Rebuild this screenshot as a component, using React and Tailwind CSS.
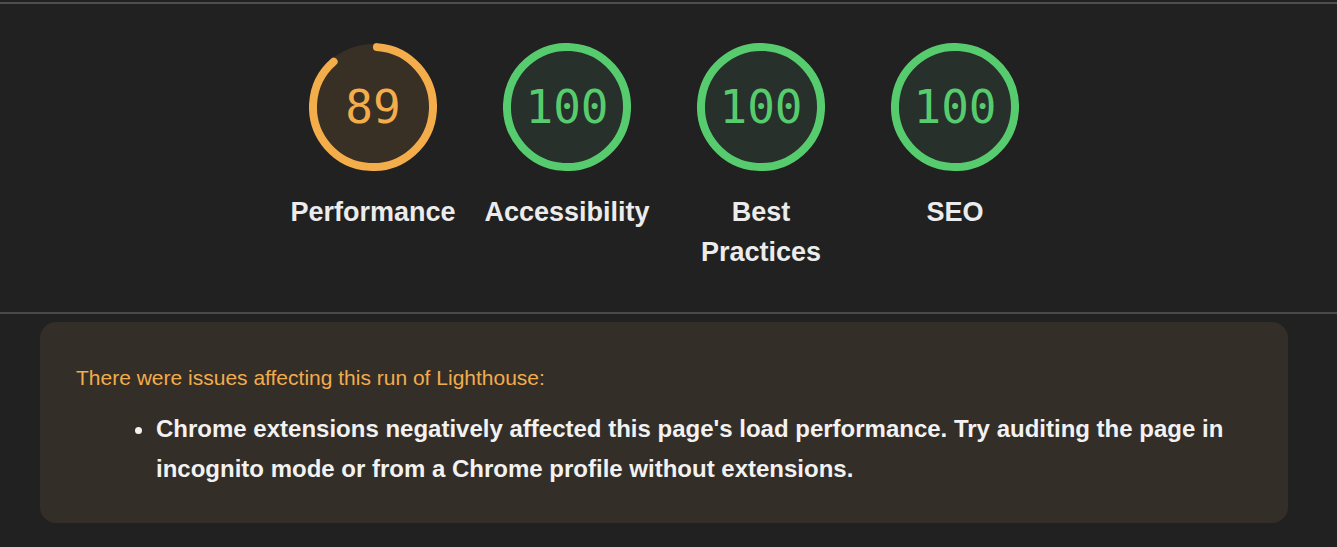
import React from "react";

function Gauge({ value, label, color, fill }) {
  const C = 2 * Math.PI * 60;
  const full = value >= 100;
  const len = full ? C : (value / 100) * C - 6;
  return (
    <div className="flex w-[176px] flex-col items-center">
      <div className="relative h-[128px] w-[128px]">
        <svg width="128" height="128" viewBox="0 0 128 128" className="absolute inset-0">
          <circle cx="64" cy="64" r="63" fill={fill} />
          <circle
            cx="64"
            cy="64"
            r="60"
            fill="none"
            stroke={color}
            strokeWidth="8"
            strokeLinecap={full ? "butt" : "round"}
            strokeDasharray={`${len} ${C}`}
            transform="rotate(-86.2 64 64)"
          />
        </svg>
        <div
          className="absolute inset-0 flex items-center justify-center text-[46px] leading-none"
          style={{ color, fontFamily: '"DejaVu Sans Mono", monospace' }}
        >
          <span className="-mt-[1px]">{value}</span>
        </div>
      </div>
      <div className="mt-[21px] text-center text-[27px] font-bold leading-[40px] text-[#ececec] [font-family:'Liberation_Sans',Arial,sans-serif]">
        {label}
      </div>
    </div>
  );
}

export default function App() {
  return (
    <div className="min-h-[547px] w-[1337px] bg-[#212121] [font-family:'Liberation_Sans',Arial,sans-serif]">
      <div className="h-[2px] bg-[#212121]" />
      <div className="h-[2px] bg-[#4f4f4f]" />
      <div className="w-[1328px]">
        <div className="flex h-[308px] justify-center gap-[18px] pt-[39px]">
          <Gauge value={89} label="Performance" color="#f4ad4b" fill="#382f25" />
          <Gauge value={100} label="Accessibility" color="#57cc6e" fill="#27302a" />
          <Gauge value={100} label={<>Best<br />Practices</>} color="#57cc6e" fill="#27302a" />
          <Gauge value={100} label="SEO" color="#57cc6e" fill="#27302a" />
        </div>
      </div>
      <div className="h-[2px] w-[1337px] bg-[#4a4a4a]" />
      <div className="w-[1328px] px-[40px] pt-[8px]">
        <div className="h-[201px] rounded-[16px] bg-[#342e28] px-[36px] pt-[42px]">
          <div className="text-[21px] leading-[28px] text-[#f2ac4b]">
            There were issues affecting this run of Lighthouse:
          </div>
          <ul className="mt-[17px] list-disc pl-[80px] pr-[20px] text-[24px] font-bold leading-[40px] text-[#f2f2f2]">
            <li>
              Chrome extensions negatively affected this page's load performance. Try auditing the page in incognito mode or from a Chrome profile without extensions.
            </li>
          </ul>
        </div>
      </div>
    </div>
  );
}
